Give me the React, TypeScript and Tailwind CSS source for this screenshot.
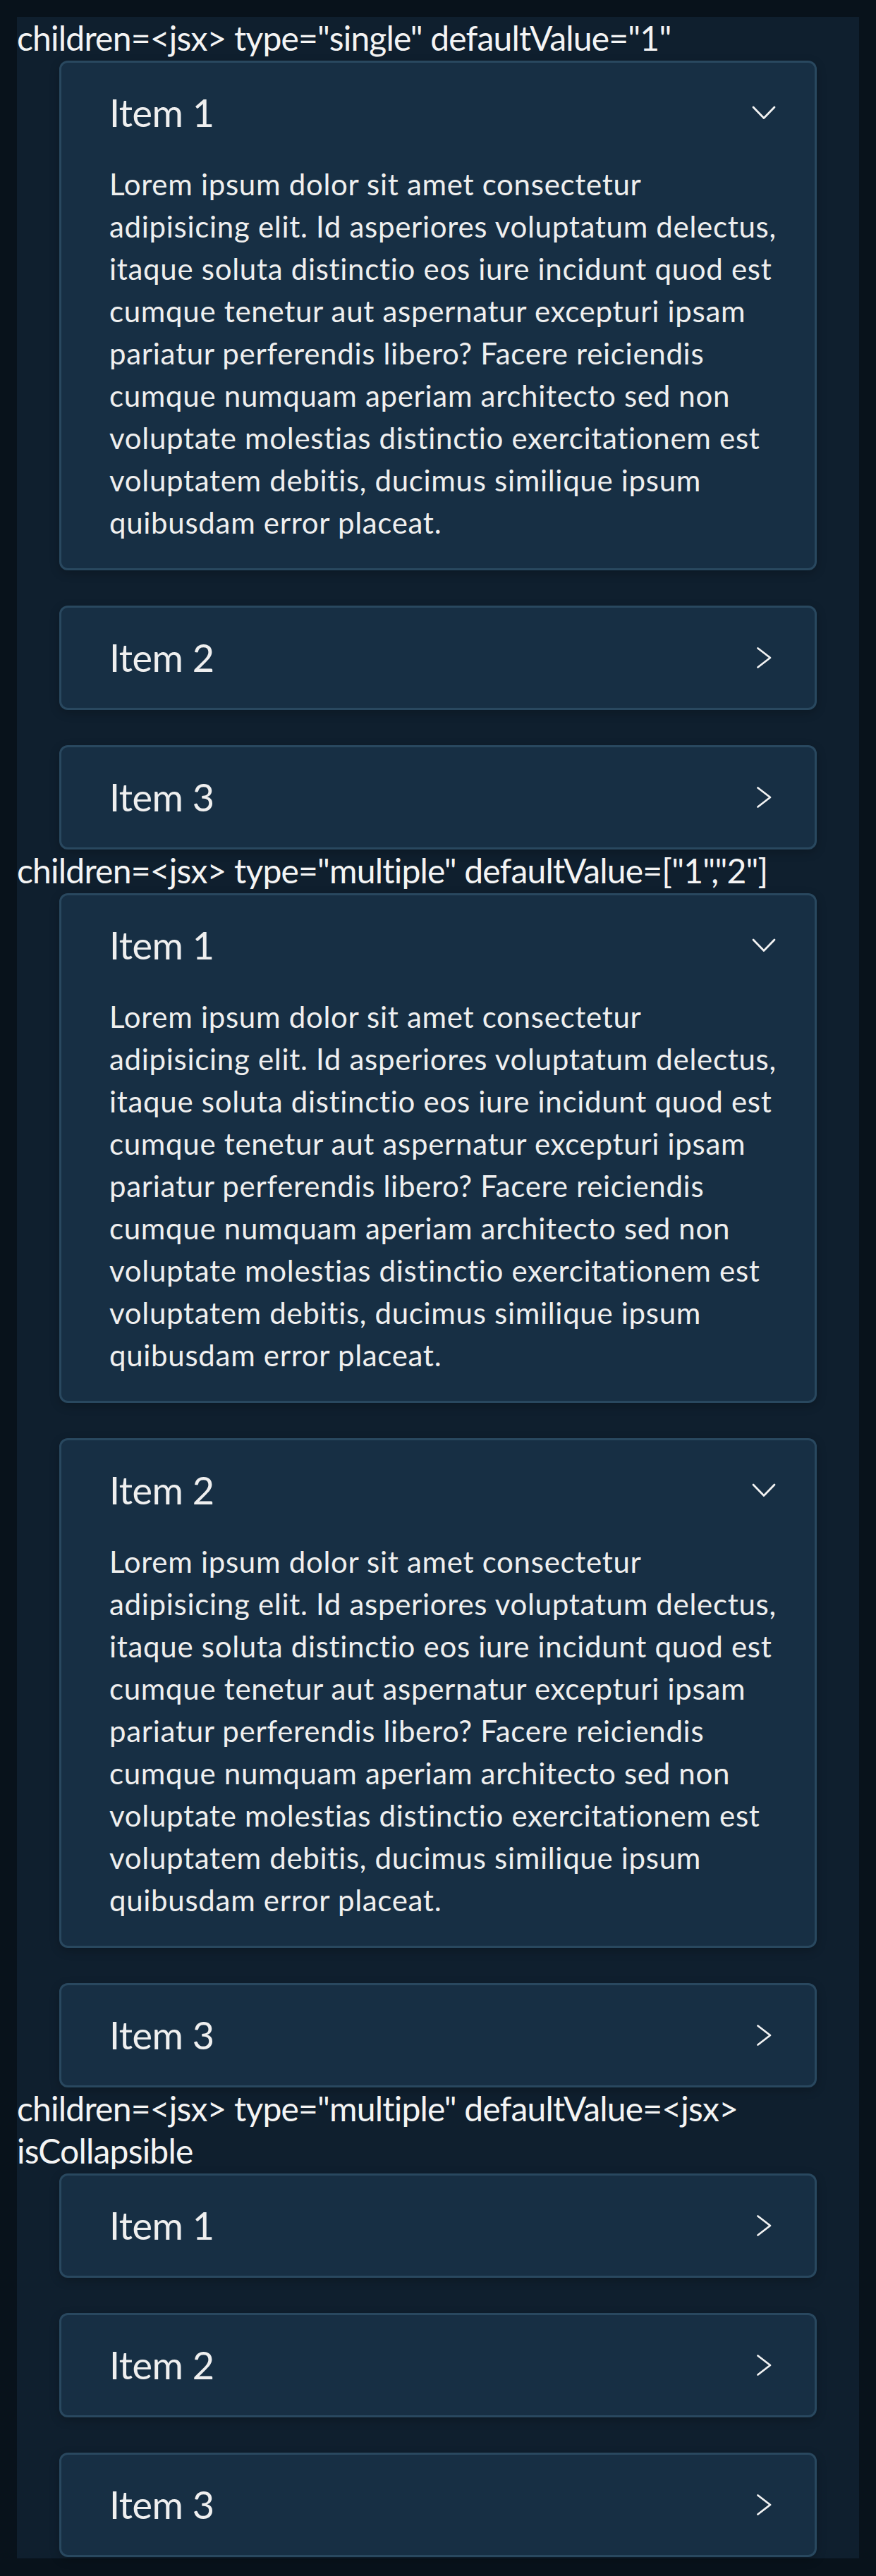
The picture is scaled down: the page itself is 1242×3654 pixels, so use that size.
import React from "react";

const LOREM = [
  "Lorem ipsum dolor sit amet consectetur",
  "adipisicing elit. Id asperiores voluptatum delectus,",
  "itaque soluta distinctio eos iure incidunt quod est",
  "cumque tenetur aut aspernatur excepturi ipsam",
  "pariatur perferendis libero? Facere reiciendis",
  "cumque numquam aperiam architecto sed non",
  "voluptate molestias distinctio exercitationem est",
  "voluptatem debitis, ducimus similique ipsum",
  "quibusdam error placeat.",
];

function ChevronDown() {
  return (
    <svg width="40" height="40" viewBox="0 0 40 40" fill="none" className="shrink-0">
      <polyline points="5,12 20,27.5 35,12" stroke="#f2f2f2" strokeWidth="2.8" strokeLinecap="round" strokeLinejoin="round" />
    </svg>
  );
}

function ChevronRight() {
  return (
    <svg width="40" height="40" viewBox="0 0 40 40" fill="none" className="shrink-0">
      <polyline points="11.5,6.5 29,20 11.5,33.5" stroke="#f2f2f2" strokeWidth="2.8" strokeLinecap="round" strokeLinejoin="round" />
    </svg>
  );
}

function Item({ title, open }: { title: string; open: boolean }) {
  return (
    <div className="rounded-[12px] border-[3px] border-[#29485f] bg-[#172f44] shadow-[0_4px_14px_rgba(0,0,0,0.22)]">
      <div className="flex h-[142px] items-center justify-between pl-[68px] pr-[52px]">
        <span className="text-[54px] leading-[80px] tracking-[-0.5px] text-[#efefef]">{title}</span>
        {open ? <ChevronDown /> : <ChevronRight />}
      </div>
      {open && (
        <div className="pb-[35px] pl-[68px] pr-[20px] text-[42px] leading-[60px] tracking-[0.7px] text-[#efefef]">
          {LOREM.map((l, i) => (
            <span key={i} className="block whitespace-nowrap">
              {l}
            </span>
          ))}
        </div>
      )}
    </div>
  );
}

function Section({ heading, open }: { heading: string[]; open: boolean[] }) {
  return (
    <div className="flex flex-col">
      <div className="text-[48px] leading-[60px] tracking-[-0.8px] text-[#f4f4f4]">
        {heading.map((h, i) => (
          <span key={i} className="block whitespace-nowrap">
            {h}
          </span>
        ))}
      </div>
      <div className="mx-[60px] mt-[2px] flex flex-col gap-[50px]">
        <Item title="Item 1" open={open[0]} />
        <Item title="Item 2" open={open[1]} />
        <Item title="Item 3" open={open[2]} />
      </div>
    </div>
  );
}

export default function App() {
  return (
    <div
      className="min-h-screen bg-[#08121b] p-6"
      style={{ fontFamily: 'Lato, "Liberation Sans", sans-serif' }}
    >
      <div className="flex flex-col bg-[#0f1f2e] pb-[2px]">
        <Section heading={['children=<jsx> type="single" defaultValue="1"']} open={[true, false, false]} />
        <Section heading={['children=<jsx> type="multiple" defaultValue=["1","2"]']} open={[true, true, false]} />
        <Section
          heading={['children=<jsx> type="multiple" defaultValue=<jsx>', "isCollapsible"]}
          open={[false, false, false]}
        />
      </div>
    </div>
  );
}
